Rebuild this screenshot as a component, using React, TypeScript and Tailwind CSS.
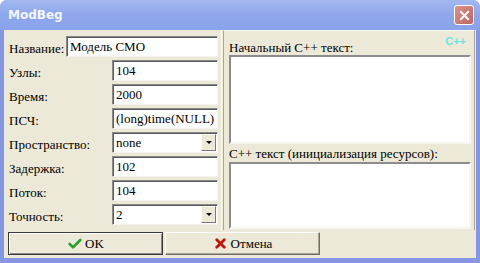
import { Check, X } from 'lucide-react';

const serifFont = { fontFamily: "'Liberation Serif', 'DejaVu Serif', 'Noto Serif', 'Times New Roman', serif" };

function Field({ value, wide }: { value: string; wide?: boolean }) {
  return (
    <div
      style={serifFont}
      className={`h-[21px] bg-white border border-t-[#8a8a8a] border-l-[#8a8a8a] border-b-[#f4f3ee] border-r-[#f4f3ee] shadow-[inset_1px_1px_0_#5a5a5a] pl-[3px] pt-[1px] text-[13px] leading-[18px] text-black ${
        wide ? 'w-[152px]' : 'w-[106px]'
      }`}
    >
      {value}
    </div>
  );
}

function Select({ value }: { value: string }) {
  return (
    <div
      style={serifFont}
      className="h-[21px] w-[106px] bg-white border border-t-[#8a8a8a] border-l-[#8a8a8a] border-b-[#f4f3ee] border-r-[#f4f3ee] shadow-[inset_1px_1px_0_#5a5a5a] flex items-stretch text-[13px] leading-[18px] text-black"
    >
      <div className="flex-1 pl-[3px] pt-[1px]">{value}</div>
      <div className="w-[15px] mt-[1px] mb-[1px] mr-[1px] bg-[#ece9d8] border border-t-[#fbfaf6] border-l-[#fbfaf6] border-b-[#7a7a7a] border-r-[#7a7a7a] flex items-center justify-center">
        <div className="w-0 h-0 border-l-[3px] border-r-[3px] border-t-[3px] border-l-transparent border-r-transparent border-t-black" />
      </div>
    </div>
  );
}

function Row({ label, children, wide }: { label: string; children: React.ReactNode; wide?: boolean }) {
  return (
    <div className="h-[24px] flex items-start">
      <div
        style={serifFont}
        className={`${wide ? 'w-[57px]' : 'w-[103px]'} pt-[5px] text-[13px] leading-[16px] text-black whitespace-nowrap`}
      >
        {label}
      </div>
      {children}
    </div>
  );
}

function TextArea({ h }: { h: string }) {
  return (
    <div
      className={`${h} w-[242px] bg-white border-2 border-t-[#8c8c8c] border-l-[#8c8c8c] border-b-[#f7f6f1] border-r-[#f7f6f1]`}
    />
  );
}

export default function App() {
  return (
    <div className="w-[480px] h-[263px] bg-white">
      <div className="w-[480px] h-[263px] rounded-t-[7px] bg-[#8596e2] flex flex-col overflow-hidden">
        {/* Title bar */}
        <div className="h-[30px] flex items-center justify-between pl-[8px] pr-[6px] bg-gradient-to-b from-[#a3b8f0] via-[#8ea7ec] to-[#8aa2ea]">
          <span className="text-[#f4f6ff] font-bold text-[12px] font-['DejaVu_Sans',Verdana,sans-serif]">
            ModBeg
          </span>
          <div className="w-[20px] h-[20px] rounded-[3px] border border-white bg-gradient-to-br from-[#d9928e] to-[#c0645f] flex items-center justify-center">
            <X size={15} strokeWidth={3} color="#ffffff" />
          </div>
        </div>

        {/* Body */}
        <div className="flex-1 mx-[4px] mb-[5px] bg-[#ece9d8] flex flex-col">
          <div className="flex h-[200px]">
            {/* Left panel */}
            <div className="w-[218px] pl-[5px] pt-[6px] border-r border-[#fbfaf5]">
              <Row label="Название:" wide>
                <Field value="Модель СМО" wide />
              </Row>
              <Row label="Узлы:">
                <Field value="104" />
              </Row>
              <Row label="Время:">
                <Field value="2000" />
              </Row>
              <Row label="ПСЧ:">
                <Field value="(long)time(NULL)" />
              </Row>
              <Row label="Пространство:">
                <Select value="none" />
              </Row>
              <Row label="Задержка:">
                <Field value="102" />
              </Row>
              <Row label="Поток:">
                <Field value="104" />
              </Row>
              <Row label="Точность:">
                <Select value="2" />
              </Row>
            </div>

            {/* Right panel */}
            <div className="flex-1 ml-[1px] mr-[1px] border-l border-t border-r border-l-[#a9a797] border-t-[#fbfaf5] border-r-[#a9a797] pl-[5px] pt-[9px] relative">
              <span className="absolute right-[8px] top-[2px] text-[11px] font-bold text-[#6fe4dc] font-['Liberation_Sans',Arial,sans-serif]">
                C++
              </span>
              <div style={serifFont} className="text-[13px] leading-[15px] text-black">
                Начальный C++ текст:
              </div>
              <TextArea h="h-[89px]" />
              <div style={serifFont} className="text-[13px] leading-[17px] text-black mt-[1px]">
                C++ текст (инициализация ресурсов):
              </div>
              <TextArea h="h-[67px]" />
            </div>
          </div>

          {/* Buttons */}
          <div style={serifFont} className="flex pl-[4px] pt-[2px] gap-[2px]">
            <div className="w-[155px] h-[23px] border border-[#3a3a3a] bg-[#ece9d8] shadow-[inset_1px_1px_0_#ffffff,inset_-1px_-1px_0_#8a8a8a] flex items-center justify-center gap-[2px] text-[13px] text-black">
              <Check size={16} strokeWidth={4} color="#2aa02a" />
              <span>OK</span>
            </div>
            <div className="w-[155px] h-[23px] border border-t-[#ffffff] border-l-[#ffffff] border-b-[#6d6d6d] border-r-[#6d6d6d] bg-[#ece9d8] shadow-[inset_-1px_-1px_0_#a9a797] flex items-center justify-center gap-[3px] text-[13px] text-black">
              <X size={15} strokeWidth={4.5} color="#c0140c" />
              <span>Отмена</span>
            </div>
          </div>
        </div>
      </div>
    </div>
  );
}
